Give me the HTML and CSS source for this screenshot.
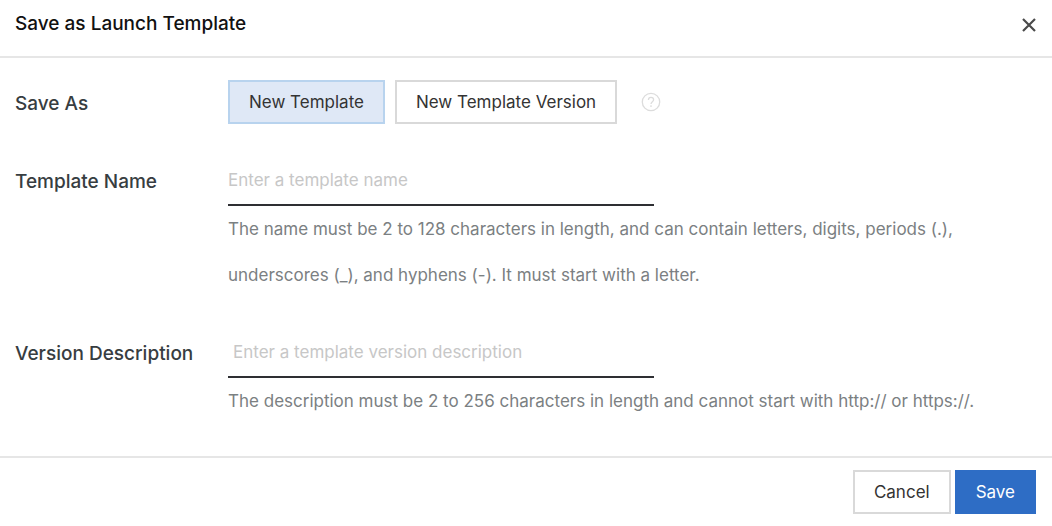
FILE: index.html
```html
<!DOCTYPE html>
<html lang="en">
<head>
<meta charset="utf-8">
<meta name="viewport" content="width=device-width, initial-scale=1">
<title>Save as Launch Template</title>
<link rel="stylesheet" href="styles.css">
</head>
<body>
<form class="dialog" role="dialog" aria-labelledby="dialog-title">
  <header class="dialog-header">
    <h1 class="dialog-title" id="dialog-title">Save as Launch Template</h1>
    <button class="icon-button close" type="button" aria-label="Close">
      <svg width="14" height="14" viewBox="0 0 14 14" fill="none" stroke="#4a4a4a" stroke-width="2.2" aria-hidden="true"><path d="M1 1l12 12M13 1L1 13"/></svg>
    </button>
  </header>
  <div class="dialog-body">
    <div class="row row-choice" role="group" aria-labelledby="save-as">
      <span class="label" id="save-as">Save As</span>
      <div class="choices">
        <button class="button selected" type="button" aria-pressed="true">New Template</button>
        <button class="button" type="button" aria-pressed="false">New Template Version</button>
        <button class="icon-button help" type="button" aria-label="Help">
          <svg width="20" height="20" viewBox="0 0 20 20" fill="none" stroke="#dcdcdc" stroke-width="1.3" aria-hidden="true"><circle cx="10" cy="10" r="8.7"/><path d="M7.4 8.1C7.4 6.4 8.5 5.4 10 5.4s2.6 1 2.6 2.4c0 1.9-2.6 2.1-2.6 4.3M10 13.3v1.6"/></svg>
        </button>
      </div>
    </div>
    <div class="row row-name">
      <label class="label" for="name">Template Name</label>
      <div class="field">
        <input class="input" id="name" type="text" placeholder="Enter a template name" aria-describedby="name-hint">
        <p class="hint" id="name-hint">The name must be 2 to 128 characters in length, and can contain letters, digits, periods (.), underscores (_), and hyphens (-). It must start with a letter.</p>
      </div>
    </div>
    <div class="row">
      <label class="label" for="description">Version Description</label>
      <div class="field">
        <input class="input input-indented" id="description" type="text" placeholder="Enter a template version description" aria-describedby="description-hint">
        <p class="hint" id="description-hint">The description must be 2 to 256 characters in length and cannot start with http:// or https://.</p>
      </div>
    </div>
  </div>
  <footer class="dialog-footer">
    <button class="button" type="button">Cancel</button>
    <button class="button primary" type="submit">Save</button>
  </footer>
</form>
</body>
</html>
```
FILE: styles.css
```css
* {
  box-sizing: border-box;
}

body {
  margin: 0;
  background: #fff;
  color: #333;
  font: 17px/24px Inter, "Liberation Sans", sans-serif;
}

.dialog-header {
  display: flex;
  align-items: center;
  justify-content: space-between;
  padding: 12px 16px 20px 15px;
  border-bottom: 2px solid #e6e6e6;
}

.dialog-title {
  margin: 0;
  color: #111;
  font-size: 19px;
  font-weight: 500;
  line-height: 24px;
}

.icon-button {
  display: flex;
  padding: 0;
  border: 0;
  background: none;
  cursor: pointer;
}

.close {
  padding-top: 2px;
}

.dialog-body {
  padding: 22px 16px 32px 15px;
}

.row {
  display: grid;
  grid-template-columns: 197px 1fr;
  column-gap: 16px;
}

.row-choice {
  margin-bottom: 32px;
}

.row-name {
  margin-bottom: 30px;
}

.label {
  padding-top: 14px;
  color: #373d41;
  font-size: 19px;
  font-weight: 500;
  line-height: 24px;
}

.row-choice .label {
  padding-top: 12px;
}

.choices {
  display: flex;
  align-items: center;
  gap: 10px;
}

.button {
  height: 44px;
  padding: 0 19px;
  border: 2px solid #d9d9d9;
  background: #fff;
  color: #333;
  font: inherit;
  cursor: pointer;
}

.selected {
  border-color: #b8d3ee;
  background: #dfe8f6;
}

.primary {
  border-color: #2e6dc5;
  background: #2e6dc5;
  color: #fff;
}

.help {
  margin-left: 14px;
}

.input {
  display: block;
  width: 426px;
  max-width: 100%;
  height: 50px;
  padding: 0;
  border: 0;
  border-bottom: 2px solid #2e2f33;
  border-radius: 0;
  background: none;
  color: #333;
  font: inherit;
  outline: 0;
}

.input-indented {
  padding-left: 5px;
}

.input::placeholder {
  color: #c7c7c7;
  opacity: 1;
}

.hint {
  margin: 0;
  color: #7b8082;
  line-height: 46px;
}

.dialog-footer {
  display: flex;
  justify-content: flex-end;
  gap: 4px;
  padding: 12px 16px;
  border-top: 2px solid #e6e6e6;
}
```
